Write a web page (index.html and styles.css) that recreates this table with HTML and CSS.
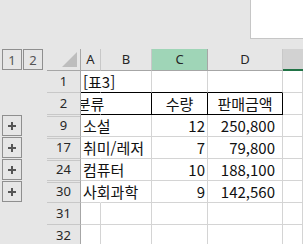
FILE: index.html
```html
<!DOCTYPE html>
<html lang="ko">
<head>
<meta charset="utf-8">
<link rel="stylesheet" href="styles.css">
</head>
<body>
<div class="top"><div class="box"></div></div>
<div class="sheet">
  <div class="ol"><span class="btn">1</span><span class="btn">2</span></div>
  <div class="rh corner"><svg width="15" height="15" viewBox="0 0 15 15"><polygon points="15,0 15,15 0,15" fill="#bdbdbd"/></svg></div>
  <div class="ch">A</div>
  <div class="ch">B</div>
  <div class="ch sel">C</div>
  <div class="ch">D</div>
  <div class="ch cur"></div>

  <div class="ol"></div>
  <div class="rh">1</div>
  <div class="c nr bb">[표3]</div>
  <div class="c bb"></div>
  <div class="c bb"></div>
  <div class="c bb"></div>
  <div class="c"></div>

  <div class="ol"></div>
  <div class="rh">2</div>
  <div class="c nr bb ctr"><span>분류</span></div>
  <div class="c bb br"></div>
  <div class="c bb br ctr"><span>수량</span></div>
  <div class="c bb br ctr"><span>판매금액</span></div>
  <div class="c"></div>

  <div class="ol"><span class="btn plus"><svg width="8" height="8" viewBox="0 0 8 8"><path d="M0 4H8M4 0V8" stroke="#555" stroke-width="2"/></svg></span></div>
  <div class="rh hid">9</div>
  <div class="c nr">소설</div>
  <div class="c"></div>
  <div class="c num">12</div>
  <div class="c num d">250,800</div>
  <div class="c"></div>

  <div class="ol"><span class="btn plus"><svg width="8" height="8" viewBox="0 0 8 8"><path d="M0 4H8M4 0V8" stroke="#555" stroke-width="2"/></svg></span></div>
  <div class="rh hid">17</div>
  <div class="c nr">취미/레저</div>
  <div class="c"></div>
  <div class="c num">7</div>
  <div class="c num d">79,800</div>
  <div class="c"></div>

  <div class="ol"><span class="btn plus"><svg width="8" height="8" viewBox="0 0 8 8"><path d="M0 4H8M4 0V8" stroke="#555" stroke-width="2"/></svg></span></div>
  <div class="rh hid">24</div>
  <div class="c nr">컴퓨터</div>
  <div class="c"></div>
  <div class="c num">10</div>
  <div class="c num d">188,100</div>
  <div class="c"></div>

  <div class="ol"><span class="btn plus"><svg width="8" height="8" viewBox="0 0 8 8"><path d="M0 4H8M4 0V8" stroke="#555" stroke-width="2"/></svg></span></div>
  <div class="rh hid">30</div>
  <div class="c nr">사회과학</div>
  <div class="c"></div>
  <div class="c num">9</div>
  <div class="c num d">142,560</div>
  <div class="c"></div>

  <div class="ol"></div>
  <div class="rh">31</div>
  <div class="c"></div>
  <div class="c"></div>
  <div class="c"></div>
  <div class="c"></div>
  <div class="c"></div>

  <div class="ol"></div>
  <div class="rh">32</div>
  <div class="c"></div>
  <div class="c"></div>
  <div class="c"></div>
  <div class="c"></div>
  <div class="c"></div>
</div>
</body>
</html>
```

FILE: styles.css
```css
html, body {
  margin: 0;
  padding: 0;
  background: #e6e6e6;
  overflow: hidden;
}
body {
  width: 303px;
  height: 244px;
}
.top {
  height: 49px;
  display: flex;
  justify-content: flex-end;
  align-items: flex-start;
}
.box {
  width: 52px;
  height: 38px;
  background: #fff;
  border-left: 1px solid #c6c6c6;
  border-bottom: 1px solid #c6c6c6;
}
.sheet {
  display: grid;
  grid-template-columns: 47px 34px 20px 51px 56px 75px 1fr;
  grid-auto-rows: 22px;
  background: #fff;
}
.ol {
  background: #e6e6e6;
  display: flex;
  align-items: flex-start;
  padding-left: 2px;
  gap: 1px;
}
.btn {
  box-sizing: border-box;
  width: 20px;
  height: 21px;
  border: 1px solid #8f8f8f;
  display: flex;
  align-items: center;
  justify-content: center;
  font: 13px "Noto Sans", sans-serif;
  color: #555;
}
.plus svg {
  display: block;
}
.rh {
  position: relative;
  z-index: 1;
  box-sizing: border-box;
  background: #e6e6e6;
  border-right: 1px solid #a6a6a6;
  border-bottom: 1px solid #c8c8c8;
  font: 13px/21px "Noto Sans", sans-serif;
  color: #262626;
  text-align: center;
}
.rh.hid {
  background-image: linear-gradient(#c8c8c8, #c8c8c8);
  background-repeat: no-repeat;
  background-size: 100% 1px;
  background-position: 0 1px;
}
.corner {
  border-bottom-color: #a6a6a6;
  display: flex;
  justify-content: flex-end;
  align-items: flex-end;
  padding: 0 3px 3px 0;
}
.corner svg {
  display: block;
}
.ch {
  box-sizing: border-box;
  background: #e6e6e6;
  border-right: 1px solid #c8c8c8;
  border-bottom: 1px solid #a6a6a6;
  font: 13px/21px "Noto Sans", sans-serif;
  color: #262626;
  text-align: center;
}
.ch.sel {
  background: #9fd5b7;
  border-right-color: #a6a6a6;
}
.ch.cur {
  background: #d2d2d2;
  border-right: 0;
  border-bottom: 2px solid #217346;
}
.c {
  box-sizing: border-box;
  border-right: 1px solid #d4d4d4;
  border-bottom: 1px solid #d4d4d4;
  padding: 0 2px;
  font: 15px/21px "Noto Sans CJK KR", sans-serif;
  color: #111;
  white-space: nowrap;
}
.c.nr {
  border-right-color: transparent;
}
.c.bb {
  border-bottom-color: #000;
}
.c.br {
  border-right-color: #000;
}
.c.ctr {
  display: flex;
  justify-content: center;
  padding: 0;
}
.c.num {
  text-align: right;
}
.c.num.d {
  padding-right: 7px;
}
```
